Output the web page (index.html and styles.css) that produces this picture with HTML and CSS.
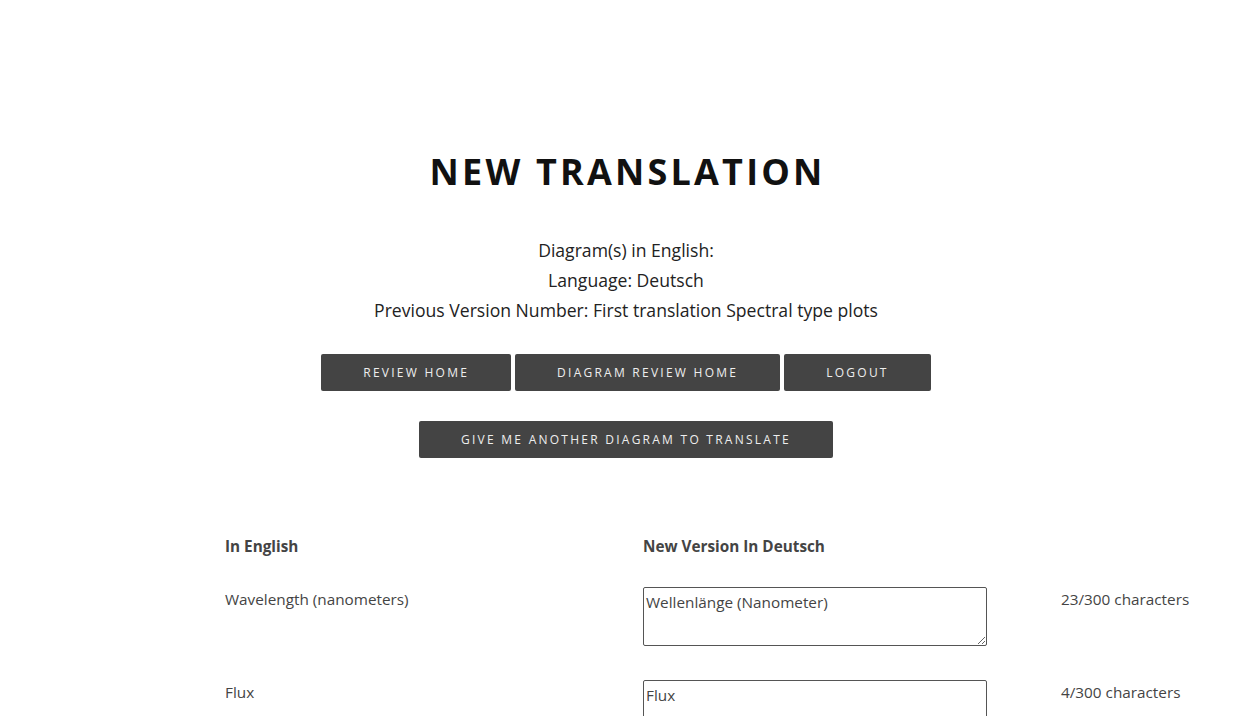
FILE: index.html
```html
<!DOCTYPE html>
<html lang="en">
<head>
<meta charset="utf-8">
<title>New Translation</title>
<link rel="stylesheet" href="styles.css">
</head>
<body>
<div class="page">
  <header class="intro">
    <h1 class="title">New Translation</h1>
    <div class="meta">
      <p>Diagram(s) in English:</p>
      <p>Language: Deutsch</p>
      <p>Previous Version Number: First translation Spectral type plots</p>
    </div>
    <nav class="nav">
      <a class="btn" href="#">Review Home</a>
      <a class="btn" href="#">Diagram Review Home</a>
      <a class="btn" href="#">Logout</a>
    </nav>
    <div class="nav nav-second">
      <a class="btn" href="#">Give me another diagram to translate</a>
    </div>
  </header>
  <section class="grid">
    <div class="head">In English</div>
    <div class="head">New Version In Deutsch</div>
    <div class="head"></div>

    <div class="cell">Wavelength (nanometers)</div>
    <div class="cell"><textarea class="input">Wellenlänge (Nanometer)</textarea></div>
    <div class="cell count">23/300 characters</div>

    <div class="cell">Flux</div>
    <div class="cell"><textarea class="input">Flux</textarea></div>
    <div class="cell count">4/300 characters</div>
  </section>
</div>
</body>
</html>
```

FILE: styles.css
```css
html, body {
  margin: 0;
  padding: 0;
  background: #fff;
}
body {
  font-family: "Open Sans", "Noto Sans", sans-serif;
  color: #444;
  overflow: hidden;
}
.page {
  padding: 150px 0 0 16px;
}
.intro {
  text-align: center;
}
.title {
  margin: 0;
  font-size: 36px;
  line-height: 43px;
  font-weight: 700;
  letter-spacing: 3.2px;
  text-transform: uppercase;
  color: #111;
  padding-left: 3.2px;
}
.meta {
  margin-top: 42px;
  color: #222;
  font-size: 17.6px;
  line-height: 30px;
}
.meta p {
  margin: 0;
}
.nav {
  margin-top: 29px;
  font-size: 0;
}
.nav-second {
  margin-top: 30px;
}
.btn {
  display: inline-block;
  margin: 0 2px;
  padding: 0 42px;
  height: 37px;
  line-height: 37px;
  background: #444;
  color: #eee;
  border-radius: 2px;
  font-size: 12px;
  letter-spacing: 2.25px;
  text-decoration: none;
  text-transform: uppercase;
}
.grid {
  display: grid;
  grid-template-columns: 418px 418px auto;
  margin: 76px 0 0 209px;
  font-size: 15.3px;
  line-height: 24px;
}
.head {
  font-weight: 700;
  padding-bottom: 29px;
}
.cell {
  padding-bottom: 34px;
}
.input {
  display: block;
  box-sizing: border-box;
  width: 344px;
  height: 59px;
  margin: 0;
  padding: 2px;
  border: 1px solid #555;
  border-radius: 2px;
  font-family: "Open Sans", "Noto Sans", sans-serif;
  font-size: 15.3px;
  line-height: 24px;
  color: #444;
  background: #fff;
}
```
